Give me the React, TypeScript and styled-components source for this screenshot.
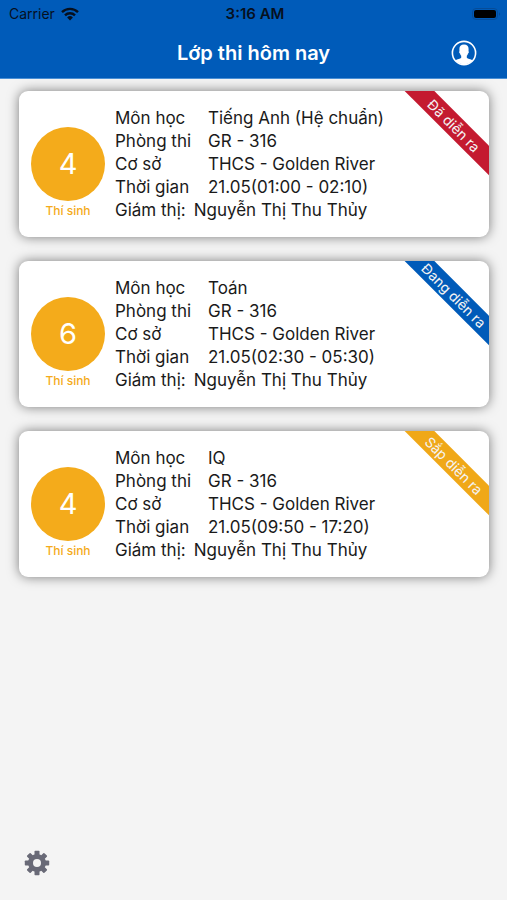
import React from "react";
import styled, { createGlobalStyle } from "styled-components";

const GlobalStyle = createGlobalStyle`
  *, *::before, *::after { box-sizing: border-box; }
  body {
    margin: 0;
    background: #f4f4f4;
    color: #1a1a1a;
    font-family: Inter, "Liberation Sans", sans-serif;
  }
`;

const Screen = styled.div`
  display: flex;
  flex-direction: column;
  min-height: 100vh;
`;

const Header = styled.header`
  background: #005bb9;
  border-bottom: 1px solid #4a90d6;
`;

const StatusBar = styled.div`
  display: grid;
  grid-template-columns: 1fr auto 1fr;
  align-items: center;
  height: 27px;
  padding: 0 6px 0 9px;
  color: #06101f;
  font-size: 14px;
  line-height: 20px;
`;

const Carrier = styled.div`
  display: flex;
  align-items: center;
  gap: 6px;
`;

const Clock = styled.time`
  font-size: 15px;
  font-weight: 600;
`;

const Battery = styled.svg`
  justify-self: end;
`;

const NavBar = styled.div`
  display: grid;
  grid-template-columns: 1fr auto 1fr;
  align-items: center;
  height: 51px;
  padding: 0 30px;
`;

const Title = styled.h1`
  grid-column: 2;
  margin: 0;
  color: #fff;
  font-size: 20px;
  line-height: 28px;
  font-weight: 600;
`;

const IconButton = styled.button`
  display: flex;
  padding: 0;
  border: 0;
  background: none;
  color: inherit;
  cursor: pointer;
`;

const ProfileButton = styled(IconButton)`
  justify-self: end;
  color: #fff;
`;

const List = styled.main`
  display: flex;
  flex: 1;
  flex-direction: column;
  gap: 24px;
  padding: 12px 18px 12px 19px;
`;

const Card = styled.article`
  position: relative;
  display: flex;
  gap: 10px;
  padding: 16px 12px 15px;
  border-radius: 9px;
  background: #fff;
  box-shadow: 0 0 12px rgba(0, 0, 0, 0.5);
`;

const Count = styled.div`
  display: flex;
  flex: none;
  flex-direction: column;
  align-items: center;
  gap: 2px;
  padding-top: 20px;
  color: #f4ab1b;
  font-size: 12px;
  font-weight: 500;
  line-height: 16px;
`;

const Circle = styled.span`
  display: flex;
  align-items: center;
  justify-content: center;
  width: 74px;
  height: 74px;
  border-radius: 50%;
  background: #f4ab1b;
  color: #fff;
  font-size: 29px;
  font-weight: 400;
`;

const Details = styled.dl`
  flex: 1;
  margin: 0;
  font-size: 17px;
  line-height: 23px;
`;

const Row = styled.div<{ $inline?: boolean }>`
  display: grid;
  grid-template-columns: ${(p) => (p.$inline ? "auto" : "93px")} 1fr;
  column-gap: ${(p) => (p.$inline ? "8px" : "0")};
`;

const Value = styled.dd`
  margin: 0;
`;

const RibbonCorner = styled.div`
  position: absolute;
  top: 0;
  right: 0;
  width: 90px;
  height: 90px;
  overflow: hidden;
  border-top-right-radius: 9px;
`;

const Ribbon = styled.span<{ $color: string }>`
  position: absolute;
  top: 24px;
  right: -35px;
  width: 140px;
  background: ${(p) => p.$color};
  color: #f4f4f4;
  font-size: 14px;
  line-height: 21px;
  text-align: center;
  white-space: nowrap;
  transform: rotate(45deg);
`;

const Footer = styled.footer`
  display: flex;
  padding: 0 24px 24px;
  color: #696a77;
`;

const WifiIcon = () => (
  <svg width="18" height="14" viewBox="0 0 18 14" fill="none" stroke="currentColor" strokeWidth="2.4" aria-hidden="true">
    <path d="M1 5.2a11.4 11.4 0 0 1 16 0" />
    <path d="M4 8.3a7.1 7.1 0 0 1 10 0" />
    <path d="M9 13.4 6.1 10.5a4.1 4.1 0 0 1 5.8 0z" fill="currentColor" stroke="none" />
  </svg>
);

const BatteryIcon = () => (
  <Battery width="30" height="14" viewBox="0 0 30 14" aria-hidden="true">
    <rect x="1.5" y="1.5" width="25" height="11" rx="3.5" fill="none" stroke="#064c98" />
    <rect x="3" y="3" width="22" height="8" rx="2" fill="#000" />
    <path d="M28 5.2a2 2 0 0 1 0 3.6z" fill="#064c98" />
  </Battery>
);

const ProfileIcon = () => (
  <svg width="26" height="26" viewBox="0 0 26 26" aria-hidden="true">
    <circle cx="13" cy="13" r="11.6" fill="none" stroke="currentColor" strokeWidth="1.6" />
    <path
      fill="currentColor"
      d="M13 4.6c3.200 0 4.700 1.900 4.600 4.600 0 .9-.1 1.500-.1 2 .6.3.3 1.900-.5 2.200-.3 1.200-.7 1.900-1.200 2.400v1.900c.8 1.100 4 1.300 5.900 2.700a11.500 11.500 0 0 1-17.400 0c1.900-1.400 5.100-1.600 5.900-2.700v-1.900c-.5-.5-.9-1.200-1.200-2.400-.8-.3-1.100-1.900-.5-2.200 0-.5-.1-1.100-.1-2C8.300 6.500 9.800 4.600 13 4.600z"
    />
  </svg>
);

const GearIcon = () => (
  <svg width="26" height="26" viewBox="0 0 26 26" fill="currentColor" aria-hidden="true">
    {[0, 45, 90, 135].map((angle) => (
      <rect key={angle} x="10.5" y="0.8" width="5" height="24.4" rx="0.8" transform={`rotate(${angle} 13 13)`} />
    ))}
    <circle cx="13" cy="13" r="9" />
    <circle cx="13" cy="13" r="4" fill="#f4f4f4" />
  </svg>
);

interface Exam {
  count: number;
  subject: string;
  time: string;
  status: string;
  color: string;
}

const exams: Exam[] = [
  { count: 4, subject: "Tiếng Anh (Hệ chuẩn)", time: "21.05(01:00 - 02:10)", status: "Đã diễn ra", color: "#c41a30" },
  { count: 6, subject: "Toán", time: "21.05(02:30 - 05:30)", status: "Đang diễn ra", color: "#005bb9" },
  { count: 4, subject: "IQ", time: "21.05(09:50 - 17:20)", status: "Sắp diễn ra", color: "#f0a818" },
];

const ExamCard = ({ exam }: { exam: Exam }) => (
  <Card>
    <Count>
      <Circle>{exam.count}</Circle>
      Thí sinh
    </Count>
    <Details>
      <Row><dt>Môn học</dt><Value>{exam.subject}</Value></Row>
      <Row><dt>Phòng thi</dt><Value>GR - 316</Value></Row>
      <Row><dt>Cơ sở</dt><Value>THCS - Golden River</Value></Row>
      <Row><dt>Thời gian</dt><Value>{exam.time}</Value></Row>
      <Row $inline><dt>Giám thị:</dt><Value>Nguyễn Thị Thu Thủy</Value></Row>
    </Details>
    <RibbonCorner>
      <Ribbon $color={exam.color}>{exam.status}</Ribbon>
    </RibbonCorner>
  </Card>
);

export default function App() {
  return (
    <Screen>
      <GlobalStyle />
      <Header>
        <StatusBar>
          <Carrier>Carrier <WifiIcon /></Carrier>
          <Clock>3:16 AM</Clock>
          <BatteryIcon />
        </StatusBar>
        <NavBar>
          <Title>Lớp thi hôm nay</Title>
          <ProfileButton type="button" aria-label="Tài khoản"><ProfileIcon /></ProfileButton>
        </NavBar>
      </Header>
      <List>
        {exams.map((exam) => <ExamCard key={exam.status} exam={exam} />)}
      </List>
      <Footer>
        <IconButton type="button" aria-label="Cài đặt"><GearIcon /></IconButton>
      </Footer>
    </Screen>
  );
}
